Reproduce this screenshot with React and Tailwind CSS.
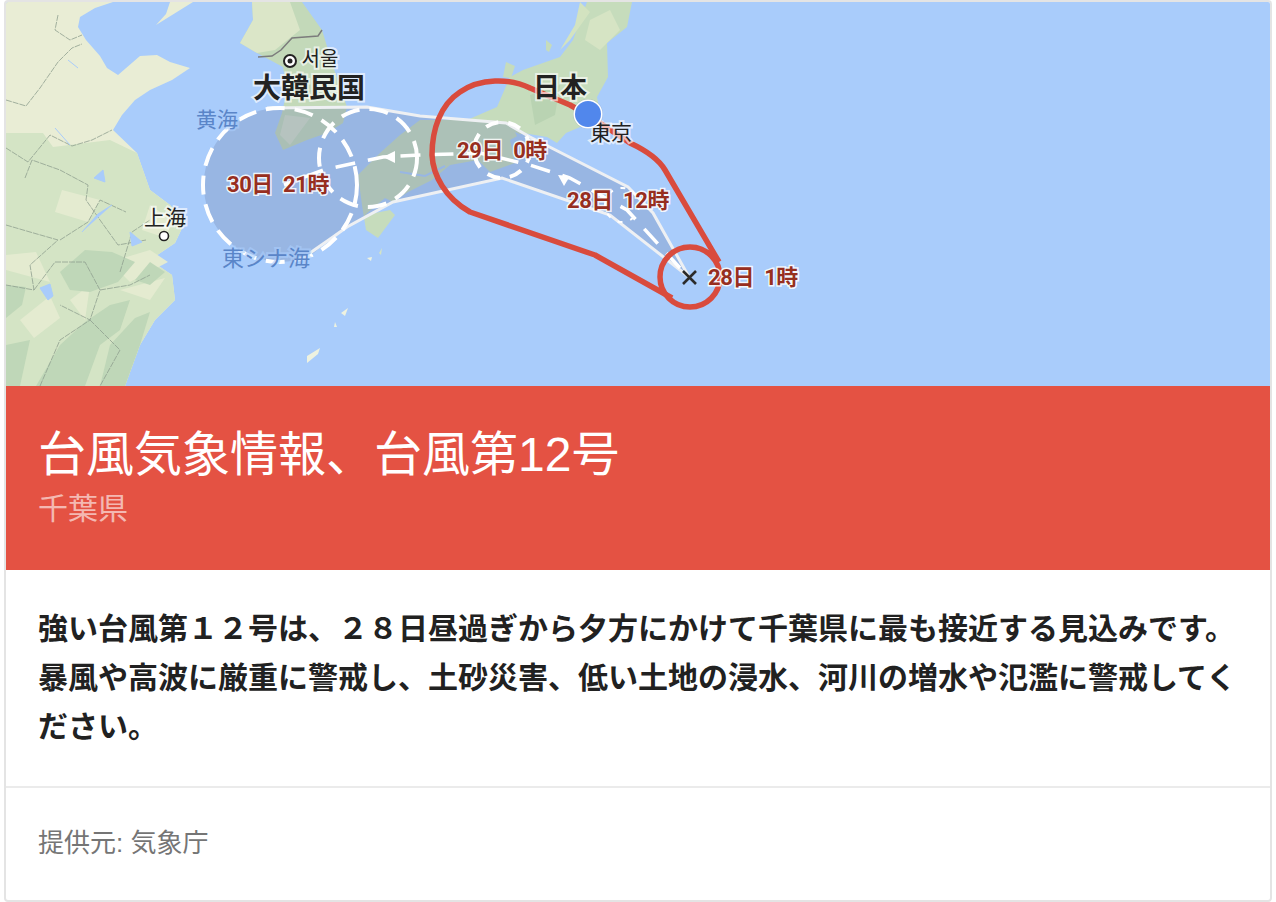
import React from 'react';

const SANS = "font-['Liberation_Sans','Noto_Sans_CJK_JP',sans-serif]";
const LABEL_FONT = "Roboto, 'Noto Sans CJK JP', sans-serif";
const MAP_FONT = "'Noto Sans CJK JP', sans-serif";

const mountains = [
  '60,272 85,250 112,252 135,262 118,282 90,292 70,290',
  '6,285 26,287 22,305 6,318',
  '36,386 60,345 85,322 110,305 130,300 120,330 100,345 85,386',
  '110,345 135,318 150,312 140,345 125,386 100,386',
  '6,345 30,340 20,386 6,386',
  '150,262 165,272 150,285 135,280',
];

const lowland = [
  '62,190 100,200 88,222 55,212',
  '150,205 172,220 166,238 142,230',
  '110,262 150,250 168,262 130,282',
  '70,300 90,285 85,320',
  '6,255 36,252 50,282 6,270',
  '120,290 165,278 150,300',
  '20,320 50,296 60,318 34,338',
  '128,330 140,325 134,345',
];

const borders = [
  'M6,100 L26,106 L40,88 L58,62 L72,48 L82,44',
  'M6,148 L28,162 L50,135 L72,146 L92,140 L112,130',
  'M25,178 L32,160 L60,170 L88,185 L86,200 L100,220 L118,245 L146,240',
  'M6,225 L30,232 L58,240 L30,265 L34,290 L6,285',
  'M60,240 L88,222 L100,200 L126,212',
  'M34,290 L55,262 L85,262 L100,290 L90,320 L60,305',
  'M100,290 L130,285 L150,275 M90,320 L120,350 L100,386',
  'M40,386 L60,340 L90,320',
  'M58,15 L55,30 L70,40 L82,35',
  'M120,272 L132,232 L150,220',
];

const rivers = [
  'M82,232 L98,214 L112,205',
  'M94,178 L103,170 L105,182 Z',
  'M40,288 L48,300 L53,296 L50,284 Z',
  'M130,232 L142,242 L132,246 Z',
  'M55,128 L70,145',
  'M68,60 L78,68',
];

function Land() {
  return (
    <g>
      {/* 中国 */}
      <path
        d="M6,2 L113,2 L95,8 L80,17 L78,27 L86,40 L100,56 L107,68 L118,75 L140,56 L157,55 L170,62 L190,68 L172,80 L150,90 L135,100 L122,115 L113,130 L137,153 L150,190 L170,205 L185,222 L175,243 L150,260 L172,275 L175,300 L155,320 L140,345 L125,386 L6,386 Z"
        fill="#e9edd5"
      />
      <path
        d="M6,133 L43,133 L53,147 L110,140 L137,153 L150,190 L170,205 L185,222 L175,243 L150,260 L172,275 L175,300 L155,320 L140,345 L125,386 L6,386 Z"
        fill="#d4e4c5"
      />
      {lowland.map((p) => <polygon key={p} points={p} fill="#e4ebd0" />)}
      {mountains.map((p) => <polygon key={p} points={p} fill="#bfd7b8" />)}
      {borders.map((d) => <path key={d} d={d} fill="none" stroke="#8f9f8f" strokeWidth="0.8" strokeDasharray="6 1" />)}
      {rivers.map((d) => <path key={d} d={d} fill="#a9ccfb" stroke="#a9ccfb" strokeWidth="1" />)}
      <polygon points="156,25 193,2 170,2 166,14" fill="#e9edd5" />
      <polygon points="307,356 320,348 318,354 307,363" fill="#eef2e0" />
      <polygon points="341,313 348,308 345,316" fill="#eef2e0" />
      <polygon points="334,327 335,322 337,327" fill="#eef2e0" />
      <polygon points="367,258 372,257 371,261" fill="#eef2e0" />
      <polygon points="379,253 382,248 381,255" fill="#d4e4c5" />

      {/* 朝鮮半島 */}
      <path
        d="M252,2 L302,2 L322,30 L333,66 L347,107 L343,123 L327,133 L307,140 L283,150 L275,133 L282,113 L287,90 L283,67 L257,53 L240,43 L253,20 Z"
        fill="#c3d9b9"
      />
      <path d="M252,2 L290,2 L300,30 L275,50 L257,53 L240,43 L253,20 Z" fill="#dbe6c8" />
      <polygon points="285,115 310,118 290,145 280,135" fill="#d4dfc8" />
      <path d="M258,57 L272,56 L281,50 L292,38 L318,36 L322,30" fill="none" stroke="#7c7c7c" strokeWidth="1.5" />

      {/* 日本 */}
      <path
        d="M587,2 L632,2 L627,27 L607,43 L608,77 L597,97 L600,113 L585,125 L566,133 L557,143 L547,137 L523,133 L510,140 L515,163 L490,172 L478,160 L450,165 L432,180 L408,192 L393,202 L385,198 L365,215 L390,210 L395,215 L378,238 L366,230 L362,205 L358,175 L380,153 L400,135 L420,120 L467,120 L497,107 L510,77 L523,70 L560,57 L573,40 Z"
        fill="#c6dcbc"
      />
      <polygon points="590,20 610,10 620,30 600,50 585,40" fill="#d6e4c4" />
      <polygon points="580,2 590,12 570,40 560,50 575,25" fill="#d3e3c0" />
      <polygon points="530,95 560,85 555,115 535,125" fill="#b9d3b2" />
      <polygon points="506,62 515,66 511,78 503,77" fill="#c6dcbc" />
      <polygon points="546,40 552,45 549,52 546,50" fill="#c6dcbc" />
      <path d="M400,172 L425,176 L445,166" fill="none" stroke="#a9ccfb" strokeWidth="2" />
      <path d="M515,132 L526,137 L520,143 Z" fill="#a9ccfb" />
    </g>
  );
}

function Cone() {
  const dash = { fill: 'none', stroke: '#fff', strokeWidth: 4, strokeDasharray: '19 10' };
  return (
    <g>
      <path
        d="M689,277 L610,215 L502,178 L393,202 L347,227 L333,237 L310,256 A77,77 0 1 1 267,109 L367,107 L420,116 L506,123 L530,137 L628,187 L653,213 Z"
        fill="#6f85ad"
        opacity="0.3"
      />
      <path
        d="M689,277 L610,215 L502,178 L393,202 L347,227 L333,237 L310,253"
        fill="none"
        stroke="#eef0f3"
        strokeWidth="3"
      />
      <path
        d="M689,277 L653,213 L628,187 L530,137 L506,123 L420,116 L367,107 L267,108"
        fill="none"
        stroke="#eef0f3"
        strokeWidth="3"
      />
      <circle cx="280" cy="185" r="77" {...dash} />
      <circle cx="368" cy="158" r="49" {...dash} />
      <circle cx="502" cy="150" r="28" {...dash} strokeDasharray="13 10" />
      <circle cx="622" cy="205" r="17" fill="none" stroke="#fff" strokeWidth="2" strokeDasharray="5 8" />
      <path
        d="M680,268 L627,210 L570,178 L530,165 L480,153 L420,155 L383,157 L323,170 L284,185"
        fill="none"
        stroke="#fff"
        strokeWidth="3.5"
        strokeDasharray="20 13"
      />
      <polygon points="558,175 570,176 564,186" fill="#fff" />
      <polygon points="383,157 395,151 395,163" fill="#fff" />
    </g>
  );
}

function TrackLabel({ x, y, children }) {
  return (
    <text
      x={x}
      y={y}
      fill="#972e20"
      stroke="#fff"
      strokeOpacity="0.85"
      strokeWidth="3"
      paintOrder="stroke"
      fontFamily={LABEL_FONT}
      fontWeight="700"
      fontSize="22"
      letterSpacing="-0.4"
      wordSpacing="5"
      textAnchor="middle"
    >
      {children}
    </text>
  );
}

function PlaceLabel({ x, y, size, weight = 400, color = '#222', halo = '#fff', children }) {
  return (
    <text
      x={x}
      y={y}
      fill={color}
      stroke={halo}
      strokeOpacity="0.65"
      strokeWidth="4"
      paintOrder="stroke"
      fontFamily={MAP_FONT}
      fontWeight={weight}
      fontSize={size}
      textAnchor="middle"
    >
      {children}
    </text>
  );
}

function TyphoonMap() {
  return (
    <svg className="block" width="1264" height="384" viewBox="6 2 1264 384">
      <rect x="6" y="2" width="1264" height="384" fill="#a9ccfb" />
      <Land />
      <Cone />
      <path
        d="M719,262 L665,170 C658,158 645,150 630,143 L588,115 L570,105 L530,88 C510,78 480,78 460,92 C440,105 432,130 432,155 C433,175 445,198 470,212 L595,255 L672,298"
        fill="none"
        stroke="#d94b3d"
        strokeWidth="5.5"
        strokeLinejoin="round"
      />
      <circle cx="690" cy="277" r="30" fill="none" stroke="#d94b3d" strokeWidth="5.5" />
      <path d="M683,271 L696,284 M696,271 L683,284" stroke="#2b2b2b" strokeWidth="2.6" />

      <circle cx="290" cy="61" r="6" fill="#fff" stroke="#222" strokeWidth="2" />
      <circle cx="290" cy="61" r="2.5" fill="#222" />
      <PlaceLabel x="320" y="66" size="20">서울</PlaceLabel>
      <PlaceLabel x="309" y="98" size="28" weight={700}>大韓民国</PlaceLabel>
      <PlaceLabel x="217" y="127" size="21" color="#5a85c8" halo="#a9ccfb">黄海</PlaceLabel>
      <PlaceLabel x="266" y="266" size="22" color="#5a85c8" halo="#a9ccfb">東シナ海</PlaceLabel>
      <PlaceLabel x="165" y="225" size="21">上海</PlaceLabel>
      <circle cx="164" cy="236" r="4.5" fill="#fff" stroke="#222" strokeWidth="1.6" />
      <PlaceLabel x="560" y="97" size="27" weight={700}>日本</PlaceLabel>
      <PlaceLabel x="611" y="140" size="21">東京</PlaceLabel>

      <circle cx="588" cy="114" r="15" fill="#5c6f8f" opacity="0.2" />
      <circle cx="588" cy="114" r="14.5" fill="#fff" />
      <circle cx="588" cy="114" r="13" fill="#5187ec" />

      <TrackLabel x="278" y="192">30日 21時</TrackLabel>
      <TrackLabel x="502" y="158">29日 0時</TrackLabel>
      <TrackLabel x="618" y="208">28日 12時</TrackLabel>
      <TrackLabel x="753" y="285">28日 1時</TrackLabel>
    </svg>
  );
}

export default function App() {
  return (
    <div className={`mx-1 h-[902px] overflow-hidden rounded-[4px] border-2 border-[#e4e4e4] bg-white ${SANS}`}>
      <TyphoonMap />
      <div className="h-[184px] bg-[#e45243] px-[32px] pt-[38px]">
        <h1 className="text-[48px] leading-[62px] font-normal text-white">台風気象情報、台風第12号</h1>
        <p className="mt-[3px] text-[30px] leading-[40px] text-white/60">千葉県</p>
      </div>
      <div className="h-[218px] border-b-2 border-[#ebebeb] pt-[34px] pr-[31px] pl-[32px]">
        <p className="text-[30px] leading-[49px] font-bold text-[#212121]">
          強い台風第１２号は、２８日昼過ぎから夕方にかけて千葉県に最も接近する見込みです。暴風や高波に厳重に警戒し、土砂災害、低い土地の浸水、河川の増水や氾濫に警戒してください。
        </p>
      </div>
      <div className="px-[32px] pt-[36px] text-[26px] leading-[38px] text-[#757575]">提供元: 気象庁</div>
    </div>
  );
}
